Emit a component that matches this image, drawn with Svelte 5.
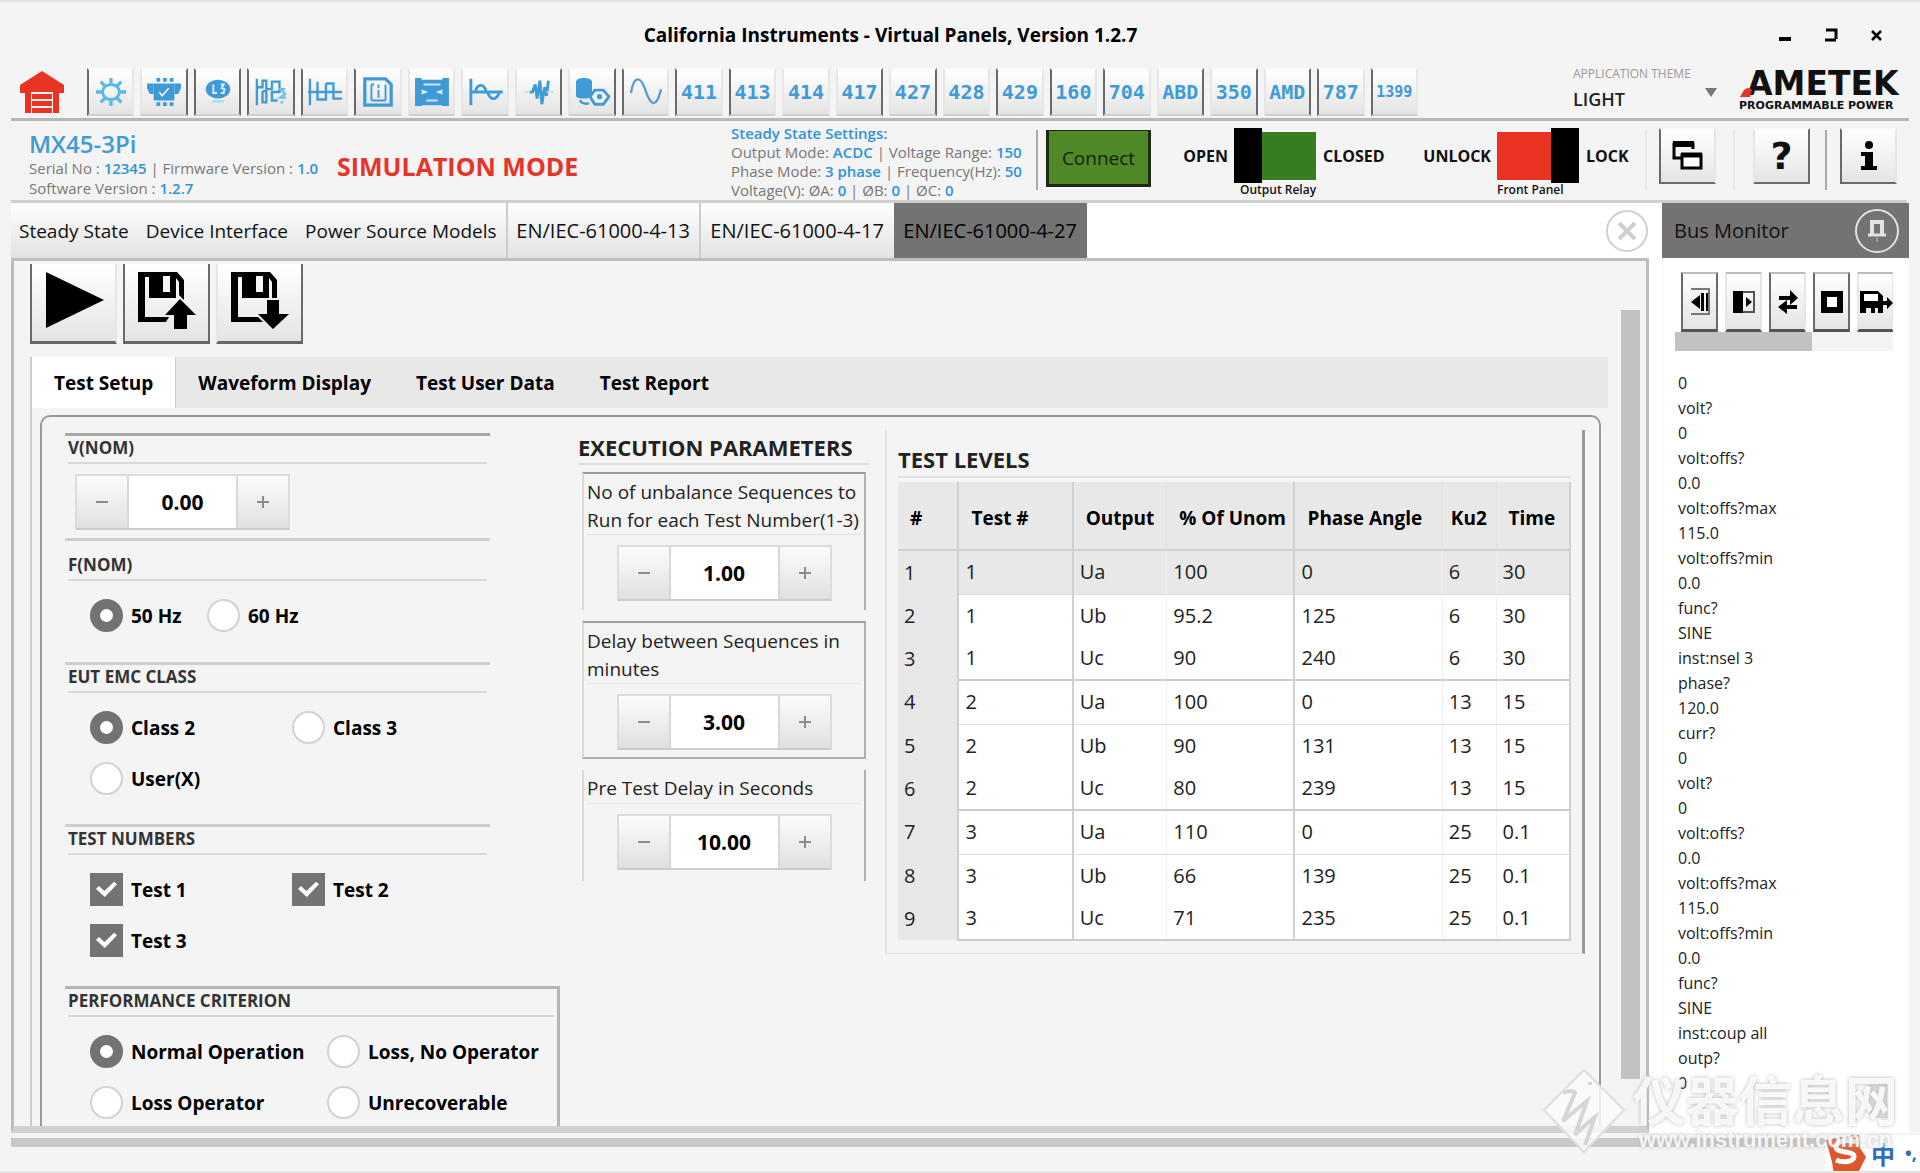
<script>
  const tools = [
    { icon: 'gear', edge: 'l' }, { icon: 'chip', edge: 'r' }, { icon: 'globe', edge: 'b' },
    { icon: 'levels', edge: 'b' }, { icon: 'axis', edge: 'l' }, { icon: 'report', edge: 'l' },
    { icon: 'frame', edge: '' }, { icon: 'dips', edge: '' }, { icon: 'pulse', edge: 'r' },
    { icon: 'data', edge: 'r' }, { icon: 'sine', edge: 'l' },
    { text: '411', edge: 'l' }, { text: '413', edge: 'l' }, { text: '414', edge: '' },
    { text: '417', edge: 'r' }, { text: '427', edge: 'r' }, { text: '428', edge: '' },
    { text: '429', edge: 'l' }, { text: '160', edge: 'l' }, { text: '704', edge: 'l' },
    { text: 'ABD', edge: 'r' }, { text: '350', edge: 'r' }, { text: 'AMD', edge: 'r' },
    { text: '787', edge: 'l' }, { text: '1399', edge: 'l' }
  ];

  const docTabs = [
    { name: 'Steady State' }, { name: 'Device Interface' }, { name: 'Power Source Models', line: true },
    { name: 'EN/IEC-61000-4-13', standard: true, line: true },
    { name: 'EN/IEC-61000-4-17', standard: true },
    { name: 'EN/IEC-61000-4-27', standard: true }
  ];
  let activeDoc = $state('EN/IEC-61000-4-27');

  const subTabs = ['Test Setup', 'Waveform Display', 'Test User Data', 'Test Report'];
  let activeSub = $state('Test Setup');

  let frequency = $state('50 Hz');
  let emcClass = $state('Class 2');
  let criterion = $state('Normal Operation');
  let tests = $state([
    { name: 'Test 1', on: true }, { name: 'Test 2', on: true }, { name: 'Test 3', on: true }
  ]);

  let vnom = $state({ value: '0.00' });
  let sequences = $state({ value: '1.00' });
  let delay = $state({ value: '3.00' });
  let preDelay = $state({ value: '10.00' });

  function step(field, by) {
    field.value = Math.max(0, Number(field.value) + by).toFixed(2);
  }

  const columns = ['#', 'Test #', 'Output', '% Of Unom', 'Phase Angle', 'Ku2', 'Time'];
  const levels = [
    [1, 1, 'Ua', '100', '0', '6', '30'],
    [2, 1, 'Ub', '95.2', '125', '6', '30'],
    [3, 1, 'Uc', '90', '240', '6', '30'],
    [4, 2, 'Ua', '100', '0', '13', '15'],
    [5, 2, 'Ub', '90', '131', '13', '15'],
    [6, 2, 'Uc', '80', '239', '13', '15'],
    [7, 3, 'Ua', '110', '0', '25', '0.1'],
    [8, 3, 'Ub', '66', '139', '25', '0.1'],
    [9, 3, 'Uc', '71', '235', '25', '0.1']
  ];

  const log = [
    '0', 'volt?', '0', 'volt:offs?', '0.0', 'volt:offs?max', '115.0', 'volt:offs?min', '0.0',
    'func?', 'SINE', 'inst:nsel 3', 'phase?', '120.0', 'curr?', '0', 'volt?', '0', 'volt:offs?',
    '0.0', 'volt:offs?max', '115.0', 'volt:offs?min', '0.0', 'func?', 'SINE', 'inst:coup all',
    'outp?', '0'
  ];
</script>

{#snippet stepper(field, label)}
  <div class="stepper">
    <button aria-label="Decrease {label}" onclick={() => step(field, -1)}>
      <svg width="16" height="16" viewBox="0 0 16 16"><path d="M2 8h12" /></svg>
    </button>
    <input type="text" aria-label={label} bind:value={field.value} />
    <button aria-label="Increase {label}" onclick={() => step(field, 1)}>
      <svg width="16" height="16" viewBox="0 0 16 16"><path d="M2 8h12M8 2v12" /></svg>
    </button>
  </div>
{/snippet}

{#snippet toolIcon(name)}
  <svg class="glyph" viewBox="0 0 38 34" fill="none" stroke="#3f9ad8" stroke-width="2.5">
    {#if name === 'gear'}
      <g stroke="#58b9e6">
        <ellipse cx="19" cy="17" rx="9" ry="8" stroke-width="3" />
        <path d="M19 8V2M19 32v-6M10 17H3M35 17h-7M12.500 10.500 8 6M30 28l-4.500-4.500M12.500 23.500 8 28M30 6l-4.500 4.500" stroke-width="3.500" />
      </g>
    {:else if name === 'chip'}
      <rect x="8" y="8" width="22" height="18" fill="#3f9ad8" stroke="none" />
      <path d="M1 8h36v5l-3 6h-4V8H8v11H4l-3-6z" fill="#3f9ad8" stroke="none" />
      <path d="M11 4h4M18 4h4M25 4h4M11 30h4M18 30h4M25 30h4" stroke-width="4" />
      <path d="m14 17 3 4 7-8" stroke="#fff" stroke-width="1.500" />
    {:else if name === 'globe'}
      <ellipse cx="19" cy="14" rx="13" ry="10" fill="#3f9ad8" stroke="none" />
      <path d="M14 9v9h4M22 9h3l-2 4 3 1-1 4h-3" stroke="#d8f0fb" stroke-width="2" />
      <path d="M13 27h12" stroke="#a5dcf3" />
    {:else if name === 'levels'}
      <path d="M4 3v28M4 12h6V5h4v11h-4M10 16v12h4V14h6V6h8v11h-8v9h6" />
      <path d="M34 14h-5l5 5-5 4h6M29 28h3" stroke="#74bfe8" />
    {:else if name === 'axis'}
      <path d="M3 3v28M1 17h36M11 6v19h9V8M20 8h8v16h9" />
    {:else if name === 'report'}
      <path d="M5 3h22l6 6v22H5z" stroke-width="3.500" />
      <path d="M12 9v17M27 9v17M12 9h3M12 26h15M19.500 9v4M19.500 15v8" stroke-width="2" />
    {:else if name === 'frame'}
      <path d="M1 2h7v30H1zM30 2h7v30h-7z" fill="#3f9ad8" stroke="none" />
      <path d="M7 4h24v10l-8 3 8 3v11H7V20l8-3-8-3z" fill="#3f9ad8" stroke="none" />
      <path d="M10 9h18M13 26h12" stroke="#cfe8f7" stroke-width="2" />
    {:else if name === 'dips'}
      <path d="M4 3v28M4 17h34M9 16c2-8 9-8 11 0M22 18c3 8 9 8 12 0" stroke-width="3" />
    {:else if name === 'pulse'}
      <path d="M9 17h3l3-8 2 15 3-19 2 25 3-18 2 9 2-16" stroke-width="3" />
      <path d="M4 17h6M27 17h8" stroke="#b9dcf1" stroke-width="1.500" />
    {:else if name === 'data'}
      <path d="M2 6c0-5 17-5 17 0v15c0 4-17 4-17 0z" fill="#3f9ad8" stroke="none" />
      <path d="M22 15h9l6 7-6 8h-9l-5-8z" fill="#eef6fb" stroke-width="3" />
      <circle cx="27" cy="22" r="1.500" />
      <path d="M6 26c2 3 6 4 10 3" />
    {:else}
      <path d="M3 18C6 0 13-1 18 14s11 24 17 0" stroke="#5b9bc9" stroke-width="2.500" />
    {/if}
  </svg>
{/snippet}

<div class="app">
  <header class="titlebar">
    <h1>California Instruments - Virtual Panels, Version 1.2.7</h1>
    <div class="window-buttons">
      <button aria-label="Minimise"><svg width="14" height="16" viewBox="0 0 14 16"><path d="M1 12h12" stroke-width="4" /></svg></button>
      <button aria-label="Restore"><svg width="14" height="16" viewBox="0 0 14 16"><path d="M2 3h10v9M1 13h11" stroke-width="3" /></svg></button>
      <button aria-label="Close"><svg width="14" height="16" viewBox="0 0 14 16"><path d="m2 4 9 9M11 4l-9 9" stroke-width="2.500" /></svg></button>
    </div>
  </header>

  <div class="toolbar">
    <button class="home" aria-label="Home">
      <svg width="46" height="44" viewBox="0 0 46 44" fill="#ea3323">
        <path d="M23 1 45 15v8h-5v20h-6V22H12v21H6V23H1v-8z" />
        <path d="M13 24h20v5H13zM13 31h20v5H13zM13 38h20v5H13z" />
      </svg>
    </button>
    <nav class="tools">
      {#each tools as tool}
        <button class="bevel tool {tool.edge ? 'edge-' + tool.edge : ''}" class:small={tool.text?.length > 3} aria-label={tool.text ?? tool.icon}>
          {#if tool.icon}{@render toolIcon(tool.icon)}{:else}{tool.text}{/if}
        </button>
      {/each}
    </nav>
    <div class="theme">
      <label for="theme">APPLICATION THEME</label>
      <select id="theme"><option>LIGHT</option><option>DARK</option></select>
      <svg width="12" height="9" viewBox="0 0 12 9"><path d="M0 0h12L6 9z" fill="#777" /></svg>
    </div>
    <div class="brand">
      <div class="brand-name"><svg width="14" height="10" viewBox="0 0 14 10"><path d="M0 10 4 3q5-4 8 0l-2 7z" fill="#e0342b" /></svg>AMETEK</div>
      <div class="brand-sub">PROGRAMMABLE POWER</div>
    </div>
  </div>

  <section class="info">
    <div class="device">
      <h2>MX45-3Pi</h2>
      <p>Serial No : <b>12345</b> | Firmware Version : <b>1.0</b></p>
      <p>Software Version : <b>1.2.7</b></p>
    </div>
    <strong class="mode">SIMULATION MODE</strong>
    <div class="settings">
      <p><b>Steady State Settings:</b></p>
      <p>Output Mode: <b>ACDC</b> | Voltage Range: <b>150</b></p>
      <p>Phase Mode: <b>3 phase</b> | Frequency(Hz): <b>50</b></p>
      <p>Voltage(V): ØA: <b>0</b> | ØB: <b>0</b> | ØC: <b>0</b></p>
    </div>
    <div class="cell connect-cell"><button class="connect">Connect</button></div>
    <div class="cell relay">
      <span>OPEN</span>
      <button class="switch green" role="switch" aria-checked="false" aria-label="Output Relay"><i></i></button>
      <span>CLOSED</span>
      <small>Output Relay</small>
    </div>
    <div class="cell relay panel-lock">
      <span>UNLOCK</span>
      <button class="switch red" role="switch" aria-checked="true" aria-label="Front Panel"><i></i></button>
      <span>LOCK</span>
      <small>Front Panel</small>
    </div>
    <div class="cell action">
      <button class="bevel big edge-l" aria-label="Windows">
        <svg width="32" height="32" viewBox="0 0 32 32" fill="none" stroke="#000"><path d="M9 18H2V4h19v5" stroke-width="3" /><path d="M1 4h21" stroke-width="6" /><path d="M10 28V15h19v13z" fill="#fff" stroke-width="3" /><path d="M9 15h21" stroke-width="5" /></svg>
      </button>
    </div>
    <div class="cell action help"><button class="bevel big edge-r">?</button></div>
    <div class="cell action last"><button class="bevel big edge-l" aria-label="Information">
      <svg width="20" height="32" viewBox="0 0 20 32"><circle cx="10" cy="5" r="4" /><path d="M2 12h12v14h4v4H2v-4h4V16H2z" /></svg>
    </button></div>
  </section>

  <div class="workspace">
    <main>
      <nav class="doc-tabs">
        {#each docTabs as tab}
          <button class:standard={tab.standard} class:line={tab.line} class:active={activeDoc === tab.name} onclick={() => (activeDoc = tab.name)}>{tab.name}</button>
        {/each}
        <button class="close" aria-label="Close tab">
          <svg width="44" height="44" viewBox="0 0 44 44" fill="none" stroke="#cfcfcf"><circle cx="22" cy="22" r="20" stroke-width="2" /><path d="m14 14 16 16M30 14 14 30" stroke-width="4" /></svg>
        </button>
      </nav>

      <div class="panel">
        <div class="content">
          <div class="file-buttons">
            <button class="bevel edge-l" aria-label="Run"><svg width="86" height="80" viewBox="0 0 86 80"><path d="M15 9 73 37 15 65z" /></svg></button>
            <button class="bevel edge-b" aria-label="Load">
              <svg width="86" height="80" viewBox="0 0 86 80">
                <path d="M16 9h37l7 8v20l-5-5V19l-3-4v20H25V14h-4v40h24l-3 5H14V9z" /><path d="M39 13h7v16h-7z" fill="#f6f6f6" />
                <path d="m56 36 16 16h-9v14H50V52h-9z" />
              </svg>
            </button>
            <button class="bevel edge-r" aria-label="Save">
              <svg width="86" height="80" viewBox="0 0 86 80">
                <path d="M16 9h37l7 8v18h-5V19l-3-4v20H25V14h-4v40h20l5 5H14V9z" /><path d="M39 13h7v16h-7z" fill="#f6f6f6" />
                <path d="M50 37h12v14h10L56 66 41 51h9z" />
              </svg>
            </button>
          </div>

          <div class="sub">
            <nav class="sub-tabs">
              {#each subTabs as tab}
                <button class:active={activeSub === tab} onclick={() => (activeSub = tab)}>{tab}</button>
              {/each}
            </nav>
            <div class="setup">
              <div class="groups">
                <section class="group first">
                  <h3>V(NOM)</h3>
                  {@render stepper(vnom, 'V(NOM)')}
                </section>
                <section class="group spaced">
                  <h3>F(NOM)</h3>
                  <div class="choices inline">
                    {#each ['50 Hz', '60 Hz'] as f}
                      <label><input type="radio" name="freq" value={f} bind:group={frequency} />{f}</label>
                    {/each}
                  </div>
                </section>
                <section class="group">
                  <h3>EUT EMC CLASS</h3>
                  <div class="choices">
                    {#each ['Class 2', 'Class 3', 'User(X)'] as c}
                      <label><input type="radio" name="class" value={c} bind:group={emcClass} />{c}</label>
                    {/each}
                  </div>
                </section>
                <section class="group">
                  <h3>TEST NUMBERS</h3>
                  <div class="choices">
                    {#each tests as t}
                      <label><input type="checkbox" bind:checked={t.on} />{t.name}</label>
                    {/each}
                  </div>
                </section>
                <section class="group wide">
                  <h3>PERFORMANCE CRITERION</h3>
                  <div class="choices">
                    {#each ['Normal Operation', 'Loss, No Operator', 'Loss Operator', 'Unrecoverable'] as c}
                      <label><input type="radio" name="criterion" value={c} bind:group={criterion} />{c}</label>
                    {/each}
                  </div>
                </section>
              </div>

              <section class="execution">
                <h3 class="heading">EXECUTION PARAMETERS</h3>
                <div class="param tall">
                  <p>No of unbalance Sequences to Run for each Test Number(1-3)</p>
                  {@render stepper(sequences, 'Sequences')}
                </div>
                <div class="param tall closed">
                  <p>Delay between Sequences in minutes</p>
                  {@render stepper(delay, 'Delay')}
                </div>
                <div class="param open">
                  <p>Pre Test Delay in Seconds</p>
                  {@render stepper(preDelay, 'Pre Test Delay')}
                </div>
              </section>

              <section class="levels">
                <h3 class="heading">TEST LEVELS</h3>
                <table>
                  <colgroup>
                    <col class="c-num" /><col class="c-test" /><col class="c-out" /><col class="c-unom" />
                    <col class="c-phase" /><col class="c-ku" /><col class="c-time" />
                  </colgroup>
                  <thead><tr>{#each columns as c}<th>{c}</th>{/each}</tr></thead>
                  <tbody>
                    {#each levels as row}
                      <tr>{#each row as value}<td>{value}</td>{/each}</tr>
                    {/each}
                  </tbody>
                </table>
              </section>
            </div>
          </div>
        </div>
        <div class="scrollbar"><i></i></div>
      </div>
    </main>

    <aside>
      <header>
        <h2>Bus Monitor</h2>
        <button aria-label="Pin">
          <svg width="46" height="46" viewBox="0 0 46 46" fill="none" stroke="#e2e2e2"><circle cx="23" cy="23" r="21" stroke-width="2" /><path d="M18 26V14h10v12" stroke-width="4" /><path d="M14 27h18" stroke-width="3" /><path d="M23 28v6" stroke="#999" stroke-width="2" /></svg>
        </button>
      </header>
      <div class="bus-buttons">
        <button class="bevel edge-b" aria-label="Collapse"><svg width="24" height="28" viewBox="0 0 24 28"><path d="M3 1h18v25H3" fill="none" stroke="#777" stroke-width="2" /><path d="M3 14 12 7v14zM13 5h3v18h-3zM18 5h2v18h-2z" /></svg></button>
        <button class="bevel" aria-label="Expand"><svg width="24" height="28" viewBox="0 0 24 28"><path d="M1 3h10v22H1z" /><path d="M11 4h11v20H11" fill="none" stroke="#555" stroke-width="2" /><path d="M14 9v10l6-5z" /></svg></button>
        <button class="bevel edge-l" aria-label="Transfer"><svg width="24" height="28" viewBox="0 0 24 28"><path d="M3 8h11V2l8 8-8 7v-5H3zM21 17H11v-5l-9 7 9 7v-5h10z" /></svg></button>
        <button class="bevel edge-b" aria-label="Stop"><svg width="24" height="28" viewBox="0 0 24 28"><path d="M4 6h16v16H4z" fill="#fff" stroke="#000" stroke-width="6" /></svg></button>
        <button class="bevel" aria-label="Save log"><svg width="34" height="28" viewBox="0 0 34 28"><path d="M1 3h18l5 5v5h4V9l6 6-6 6v-4h-4v8h-5v-5h-3v5h-4v-5H7v5H1z" /><path d="M5 6h14v7H5z" fill="#fff" /></svg></button>
      </div>
      <div class="bus-scroll"><i></i></div>
      <ul>
        {#each log as line}<li>{line}</li>{/each}
      </ul>
      <div class="grip"></div>
    </aside>
  </div>
  <footer></footer>

  <div class="ime">
    <svg width="42" height="40" viewBox="0 0 42 40"><path d="M1 7 34 1l1 14 6 9-7 14-25 3-2-12z" fill="#e0562b" /><path d="M31 9c-9-3-20-1-20 5 0 7 19 3 18 10-1 5-11 6-18 3" fill="none" stroke="#fff" stroke-width="5" /></svg>
    <span>中</span><span class="punct">•,</span>
  </div>
  <div class="watermark">
    <svg width="86" height="88" viewBox="0 0 86 88" fill="none">
      <path d="M43 3 83 43 43 85 3 43z" fill="#fafafa" fill-opacity=".85" stroke="#dedede" stroke-width="2" stroke-linejoin="round" />
      <path d="M22 26q10-4 12 0L22 54q14-12 24-20L34 68q12-12 20-18L44 78M49 15v3" stroke="#d6d6d6" stroke-width="4" />
    </svg>
    <div><strong>仪器信息网</strong><span>www.instrument.com.cn</span></div>
  </div>
</div>

<style>
  :global(body) { background: #f4f4f4; }
  .app {
    position: relative;
    display: flex;
    flex-direction: column;
    height: 100vh;
    box-sizing: border-box;
    overflow: hidden;
    border-top: 2px solid #e4e4e4;
    border-bottom: 2px solid #e4e4e4;
    background: #f4f4f4;
    color: #111;
    font-family: 'Open Sans', 'Noto Sans', 'Noto Sans CJK SC', sans-serif;
    font-size: 19px;
  }
  .app :global(*) { box-sizing: border-box; }
  h1, h2, h3, p, ul { margin: 0; padding: 0; font-weight: 400; }
  button { margin: 0; padding: 0; border: 0; background: none; color: inherit; font: inherit; }
  svg { display: block; flex: none; }

  .bevel {
    display: flex;
    align-items: center;
    justify-content: center;
    border: 2px solid #e6e6e6;
    border-top-color: #fafafa;
    border-bottom-color: #cfcfcf;
    background: linear-gradient(#fff, #e4e4e4);
  }
  .edge-l, .edge-b { border-left-color: #6a6a6a; }
  .edge-r, .edge-b { border-right-color: #6a6a6a; }

  .titlebar { display: flex; align-items: center; height: 66px; padding-right: 36px; }
  h1 { flex: 1; padding-left: 3px; color: #000; text-align: center; font-size: 19px; font-weight: 700; }
  .window-buttons { display: flex; gap: 32px; width: 106px; }
  .window-buttons path { fill: none; stroke: #000; }

  .toolbar {
    display: grid;
    grid-template-columns: 48px minmax(0, 1fr) 166px 170px;
    height: 53px;
    margin: 0 11px;
    padding-left: 8px;
    padding-bottom: 3px;
    border-bottom: 3px solid #b8b8b8;
  }
  .home { display: flex; align-items: center; }
  .tools { display: grid; grid-template-columns: repeat(25, minmax(0, 1fr)); gap: 6px; margin: 0 155px 0 20px; }
  .tool { color: #3f9ad8; font: 700 20px 'DejaVu Sans Mono', monospace; }
  .small { font-size: 15px; }
  .glyph { width: 36px; height: 32px; }
  .theme { position: relative; display: flex; flex-direction: column; }
  .theme label { height: 14px; color: #999; font-size: 12px; line-height: 12px; }
  .theme select { appearance: none; height: 34px; padding: 0; border: 0; background: none; color: #222; font: 600 18px 'Open Sans', sans-serif; }
  .theme svg { position: absolute; top: 20px; right: 22px; }
  .brand { color: #111; font-family: 'DejaVu Sans', sans-serif; font-weight: 700; white-space: nowrap; }
  .brand-name { position: relative; padding-left: 8px; font-size: 33px; line-height: 32px; }
  .brand-name svg { position: absolute; bottom: 3px; left: 1px; }
  .brand-sub { font-size: 11px; line-height: 12px; }

  .info {
    display: flex;
    height: 82px;
    margin: 0 13px 0 11px;
    padding-left: 18px;
    border-bottom: 3px solid #cfcfcf;
  }
  .info b { color: #2f93d8; font-weight: 600; }
  .device { width: 308px; padding-top: 8px; white-space: nowrap; }
  .device h2 { color: #3f9ad8; font-size: 24px; font-weight: 600; line-height: 29px; }
  .device p { color: #777; font-size: 15px; line-height: 20px; }
  .mode { flex: 1; align-self: center; padding-top: 10px; color: #e5352b; font-size: 25px; font-weight: 700; line-height: 32px; }
  .settings { width: 300px; padding-top: 2px; color: #777; font-size: 15px; line-height: 20px; white-space: nowrap; }
  .settings p { height: 19px; }
  .cell { margin: 9px 0 10px; border-left: 2px solid #e8e8e8; }
  .connect-cell { width: 126px; margin-left: 5px; padding-left: 8px; border-color: #a9a9a9; }
  .connect { width: 105px; height: 57px; border: solid #1e2b12; border-width: 1px 3px 3px; background: #4f8826; color: #14200b; }
  .relay {
    display: grid;
    grid-template-columns: 66px 86px 1fr;
    grid-template-rows: 55px 14px;
    column-gap: 2px;
    align-items: center;
    width: 243px;
    margin: 7px 0 0;
    color: #111;
    font-size: 16px;
    font-weight: 700;
    border: 0;
  }
  .relay span:first-child { text-align: right; }
  .relay span:nth-of-type(2) { padding-left: 5px; }
  .relay small { grid-column: 2 / 4; padding-left: 10px; font-size: 12px; font-weight: 600; line-height: 14px; }
  .panel-lock { grid-template-columns: 86px 86px 1fr; width: 240px; }
  .panel-lock small { padding-left: 4px; }
  .switch { display: flex; align-items: center; margin-left: 4px; height: 55px; width: 82px; background: linear-gradient(currentColor, currentColor) center / 100% 48px no-repeat; }
  .switch i { width: 28px; height: 55px; background: #000; }
  .green { color: #367d22; }
  .red { color: #ea3323; justify-content: flex-end; }
  .action { display: flex; width: 88px; padding-left: 12px; }
  .action.help { width: 92px; padding-left: 18px; }
  .action.last { width: 82px; padding-left: 13px; border-color: #a9a9a9; }
  .big { width: 57px; height: 56px; margin-top: -2px; border-bottom-color: #6a6a6a; font: 700 38px/38px 'DejaVu Sans', sans-serif; }

  .workspace { display: grid; grid-template-columns: minmax(0, 1fr) 247px; flex: 1; min-height: 0; margin: 0 11px; background: #fff; }
  main { display: flex; flex-direction: column; min-width: 0; min-height: 0; padding-right: 13px; }
  .doc-tabs { display: flex; flex: none; height: 55px; }
  .doc-tabs button { padding: 0 9px 0 8px; background: linear-gradient(#fff, #e2e2e2); color: #111; white-space: nowrap; }
  .doc-tabs .standard { min-width: 193px; padding: 0; font-size: 20px; }
  .doc-tabs .line { border-right: 2px solid #ccc; }
  .doc-tabs .active { background: #737373; color: #000; }
  .doc-tabs .close { margin-left: auto; padding: 0; background: none; }
  .panel {
    display: grid;
    grid-template-columns: minmax(0, 1fr) 19px;
    column-gap: 13px;
    flex: 1;
    min-height: 0;
    padding: 3px 6px 0 16px;
    border: solid #bdbdbd;
    border-width: 3px 3px 7px;
    border-bottom-color: #d2d2d2;
    background: #f4f4f4;
  }
  .content { display: flex; flex-direction: column; min-height: 0; overflow: hidden; }
  .file-buttons { display: flex; flex: none; gap: 6px; height: 80px; margin-bottom: 13px; }
  .file-buttons button { width: 87px; overflow: hidden; border-top: 0; border-bottom: 3px solid #666; }
  .scrollbar { min-height: 0; padding: 46px 0 47px; }
  .scrollbar i { display: block; height: 100%; background: #c2c2c2; }

  .sub { display: flex; flex-direction: column; flex: 1; min-height: 0; border-left: 2px solid #ccc; }
  .sub-tabs { display: flex; flex: none; height: 51px; background: #e8e8e8; }
  .sub-tabs button { padding: 0 22px; color: #000; font-weight: 700; border-right: 1px solid transparent; }
  .sub-tabs .active { border-color: #ccc; background: #fff; }
  .setup {
    display: grid;
    grid-template-columns: 495px 291px minmax(0, 1fr);
    flex: 1;
    min-height: 0;
    margin: 7px 7px 0 8px;
    padding: 13px 14px 0 23px;
    border: 2px solid #999;
    border-bottom: 0;
    border-radius: 10px 10px 0 0;
    overflow: hidden;
  }

  .groups { padding-top: 3px; }
  .group { width: 425px; height: 162px; padding: 0 3px; border-top: 3px solid #cfcfcf; }
  .group h3 { height: 28px; margin-bottom: 9px; border-bottom: 2px solid #d9d9d9; color: #333; font-size: 17px; font-weight: 700; line-height: 24px; }
  .first { height: 105px; border-color: #a8a8a8; }
  .first .stepper { margin: 10px 7px 0; }
  .spaced { height: 124px; }
  .spaced h3 { height: 40px; padding-top: 12px; }
  .wide { width: 495px; height: 200px; border-right: 3px solid #b5b5b5; border-top-color: #b5b5b5; }
  .choices { display: grid; grid-template-columns: 202px 1fr; grid-auto-rows: 51px; padding-left: 22px; }
  .choices.inline { grid-template-columns: 117px 1fr; }
  .wide .choices { grid-template-columns: 237px 1fr; }
  .choices label { display: flex; align-items: center; gap: 8px; color: #000; font-weight: 700; white-space: nowrap; }
  .choices input { flex: none; appearance: none; width: 33px; height: 33px; margin: 0; background: #fff; }
  .choices [type='radio'] { border: 2px solid #d2d2d2; border-radius: 50%; }
  .choices [type='radio']:checked { border: 10px solid #737373; }
  .choices [type='checkbox'] { border: 1px solid #737373; }
  .choices [type='checkbox']:checked { background: #737373; }
  .choices [type='checkbox']:checked::before {
    content: '';
    display: block;
    width: 21px;
    height: 16px;
    margin: 7px 5px;
    background: #fff;
    clip-path: polygon(0 50%, 14% 32%, 40% 62%, 86% 4%, 100% 20%, 42% 100%);
  }

  .stepper { display: grid; grid-template-columns: 50px 111px 50px; width: 215px; height: 56px; border: 2px solid #dcdcdc; border-bottom-color: #ccc; }
  .stepper button { display: flex; align-items: center; justify-content: center; background: linear-gradient(#fcfcfc, #e0e0e0); }
  .stepper path { fill: none; stroke: #8c8c8c; stroke-width: 2; }
  .stepper input { width: 100%; padding: 0; border: solid #d8d8d8; border-width: 0 2px; border-radius: 0; background: #fff; color: #000; text-align: center; font: 700 21px 'Open Sans', sans-serif; }

  .heading { border-bottom: 2px solid #e2e2e2; color: #222; font-size: 22px; font-weight: 700; white-space: nowrap; }
  .execution { margin-left: 18px; margin-right: -18px; padding-top: 1px; }
  .execution .heading { height: 34px; line-height: 32px; }
  .param { height: 111px; margin: 0 3px 11px 4px; border: solid #9d9d9d; border-width: 0 2px; border-left-color: #dadada; border-right-color: #b0b0b0; }
  .heading + .param { margin-top: 7px; }
  .param.tall { height: 138px; border-top: 2px solid #9d9d9d; }
  .param.closed { border-bottom: 2px solid #b0b0b0; }
  .param p { min-height: 34px; margin: 0 3px; padding-top: 4px; border-bottom: 1px solid #e2e2e2; color: #222; line-height: 28px; white-space: normal; }
  .param .stepper { margin: 10px auto 0; }

  .levels { margin-left: 34px; padding: 13px 11px 12px; border: solid #e2e2e2; border-width: 0 3px 1px 2px; border-right-color: #999; align-self: start; }
  .levels .heading { height: 35px; line-height: 33px; margin-bottom: 4px; }
  table { width: 100%; table-layout: fixed; border-collapse: collapse; color: #222; }
  .c-num { width: 9%; } .c-test { width: 17%; } .c-out { width: 14%; } .c-unom { width: 19%; }
  .c-phase { width: 22%; } .c-ku { width: 8%; } .c-time { width: 11%; }
  th { height: 68px; padding: 4px 0 0 12px; border: solid #d0d0d0; border-width: 0 2px 2px 0; background: #e8e8e8; color: #000; text-align: left; font-size: 19px; font-weight: 700; white-space: nowrap; }
  td { height: 43px; padding: 0 0 0 6px; border-right: 2px solid #d0d0d0; background: #fff; font-size: 20px; line-height: 24px; }
  th:nth-child(6) { padding-left: 8px; }
  th:nth-child(3), td:nth-child(3), th:nth-child(5), td:nth-child(5), th:nth-child(6), td:nth-child(6) { border-right: 1px solid #f0f0f0; }
  th:nth-child(3), th:nth-child(5), th:nth-child(6) { border-right-color: #e2e2e2; }
  td:first-child { background: #e8e8e8; }
  tr:first-child td { background: #e8e8e8; }
  tr:nth-child(3n + 1) td:not(:first-child) { height: 44px; border-bottom: 1px solid #dcdcdc; }
  tr:nth-child(3n) td:not(:first-child) { border-bottom: 2px solid #ccc; }

  aside { display: flex; flex-direction: column; min-height: 0; padding-right: 2px; border-left: 1px solid #fafafa; background: #fff; }
  aside header { display: flex; flex: none; align-items: center; justify-content: space-between; height: 55px; margin: 0 -2px 0 -1px; padding: 0 9px 0 12px; background: #737373; }
  aside h2 { color: #111; font-size: 20px; }
  .bus-buttons { display: flex; flex: none; gap: 7px; height: 60px; margin: 14px 14px 0 18px; overflow: hidden; }
  .bus-buttons button { flex: none; width: 37px; border-top-color: #bbb; border-bottom: 3px solid #555; }
  .bus-scroll { flex: none; height: 19px; margin: 0 14px 0 12px; background: #f3f3f3; }
  .bus-scroll i { display: block; width: 63%; height: 100%; background: #c2c2c2; }
  aside ul { flex: 1; min-height: 0; margin: 20px 0 0 15px; overflow: hidden; list-style: none; color: #222; font-size: 16px; line-height: 25px; }
  .grip { position: absolute; right: 27px; bottom: 53px; width: 24px; height: 37px; background: #dadada; }

  footer { flex: none; height: 38px; margin: 0 11px; border-bottom: 24px solid #f4f4f4; background: linear-gradient(#f4f4f4 5px, #c8c8c8 5px); }
  .ime { position: absolute; right: 0; bottom: 0; display: flex; align-items: center; gap: 4px; width: 95px; height: 36px; overflow: hidden; background: #fff; color: #2e6dbb; font: 700 24px 'Noto Sans CJK SC', sans-serif; white-space: nowrap; }
  .punct { padding-left: 6px; font: 700 18px 'Open Sans', sans-serif; }
  .watermark { position: absolute; right: 22px; bottom: 16px; display: flex; gap: 6px; align-items: center; color: rgba(255, 255, 255, 0.85); text-shadow: 0 0 4px #bbb; pointer-events: none; }
  .watermark div { display: flex; flex-direction: column; align-items: center; }
  .watermark strong { font: 700 53px/58px 'Noto Sans CJK SC', sans-serif; }
  .watermark span { font: 700 22px/26px 'Liberation Sans', sans-serif; }
</style>
